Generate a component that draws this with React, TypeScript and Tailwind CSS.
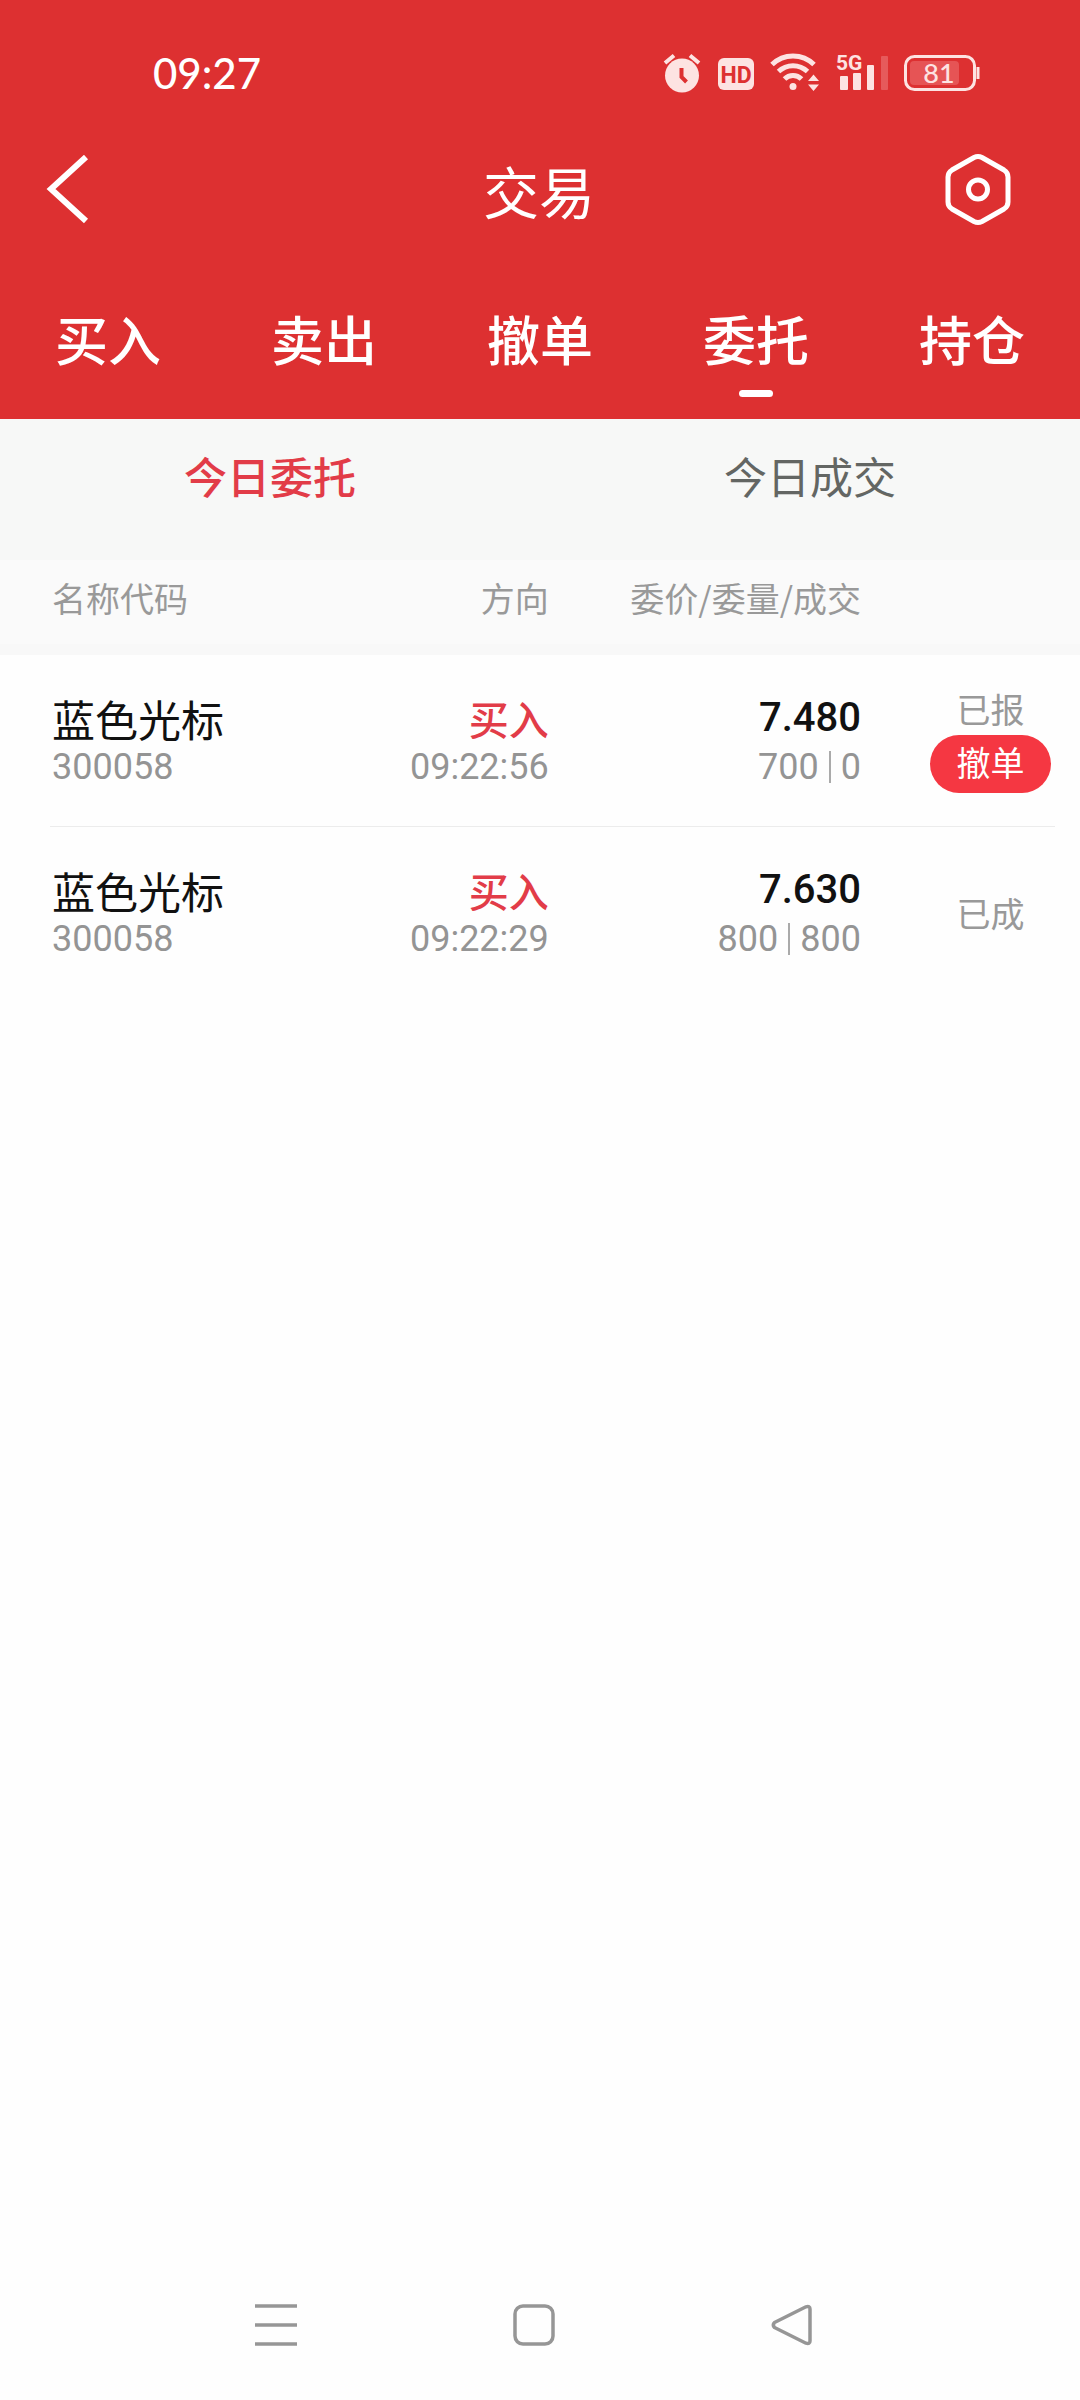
import type { ReactNode } from "react";

const tabs = ["买入", "卖出", "撤单", "委托", "持仓"];
const activeTab = "委托";

type Order = {
  name: string;
  code: string;
  side: string;
  time: string;
  price: string;
  amount: string;
  filled: string;
  status: string;
  cancellable: boolean;
};

const orders: Order[] = [
  {
    name: "蓝色光标",
    code: "300058",
    side: "买入",
    time: "09:22:56",
    price: "7.480",
    amount: "700",
    filled: "0",
    status: "已报",
    cancellable: true,
  },
  {
    name: "蓝色光标",
    code: "300058",
    side: "买入",
    time: "09:22:29",
    price: "7.630",
    amount: "800",
    filled: "800",
    status: "已成",
    cancellable: false,
  },
];

function AlarmIcon() {
  return (
    <svg width="38" height="40" viewBox="0 0 38 40" aria-hidden="true">
      <circle cx="19" cy="22.500" r="17" fill="#fde3e2" />
      <path d="M2 10 11 2.500M36 10 27 2.500" stroke="#fde3e2" strokeWidth="4" fill="none" />
      <path d="M18.500 15v9l5 5" stroke="#dd3031" strokeWidth="4" fill="none" />
    </svg>
  );
}

function HdIcon() {
  return (
    <svg width="37" height="40" viewBox="0 0 37 40" aria-hidden="true">
      <rect x="1" y="5" width="36" height="32" rx="6" fill="#fde3e2" />
      <text
        x="19"
        y="30"
        textAnchor="middle"
        fontFamily="Roboto, sans-serif"
        fontWeight="700"
        fontSize="23"
        fill="#dd3031"
      >
        HD
      </text>
    </svg>
  );
}

function WifiIcon() {
  return (
    <svg width="50" height="40" viewBox="0 0 50 40" aria-hidden="true">
      <g fill="none" stroke="#fde3e2" strokeWidth="5">
        <path d="M2 11.500a30 30 0 0 1 42 0" />
        <path d="M8.500 18.500a21 21 0 0 1 29 0" />
        <path d="M14.500 26a12 12 0 0 1 17 0" />
      </g>
      <circle cx="23" cy="33.500" r="3.500" fill="#fde3e2" />
      <path d="M38 28 43.500 21.500 49 28zM38 31.500 43.500 38 49 31.500z" fill="#fde3e2" />
    </svg>
  );
}

function SignalIcon() {
  return (
    <svg width="52" height="50" viewBox="0 -5 52 50" aria-hidden="true">
      <text
        x="0"
        y="17"
        fontFamily="Roboto, sans-serif"
        fontWeight="700"
        fontSize="21"
        fill="#fde3e2"
      >
        5G
      </text>
      <rect x="4" y="23" width="8" height="14" rx="1" fill="#fde3e2" />
      <rect x="17" y="20" width="8" height="17" rx="1" fill="#fde3e2" />
      <rect x="31" y="12" width="7" height="25" rx="1" fill="#fde3e2" />
      <rect x="45" y="3" width="7" height="34" rx="1" fill="#e65a5b" />
    </svg>
  );
}

function BatteryIcon() {
  return (
    <svg width="76" height="40" viewBox="0 0 76 40" aria-hidden="true">
      <rect x="1.500" y="3.500" width="69" height="33" rx="9" fill="none" stroke="#fde3e2" strokeWidth="3" />
      <rect x="6" y="8" width="49" height="24" rx="4" fill="#e65455" />
      <path d="M74 14v12" stroke="#fde3e2" strokeWidth="3" />
      <text
        x="35"
        y="30"
        textAnchor="middle"
        fontFamily="Lato, sans-serif"
        fontWeight="500"
        fontSize="27"
        fill="#fde3e2"
      >
        81
      </text>
    </svg>
  );
}

function StatusBar() {
  return (
    <div className="flex h-[146px] items-center justify-between pr-[100px] pl-[153px]">
      <span className="font-[Lato,sans-serif] text-[42px] font-medium">09:27</span>
      <div className="flex items-center gap-4">
        <AlarmIcon />
        <HdIcon />
        <WifiIcon />
        <SignalIcon />
        <BatteryIcon />
      </div>
    </div>
  );
}

function Cell({ className, children }: { className: string; children: ReactNode }) {
  return (
    <div
      className={`flex h-[172px] flex-col border-b border-[#ececec] group-last:border-transparent ${className}`}
    >
      {children}
    </div>
  );
}

function OrderRow({ order }: { order: Order }) {
  return (
    <tr className="group">
      <td className="pl-[50px]">
        <Cell className="items-start justify-center pt-1 pl-0.5">
          <span className="text-[43px] leading-[48px] text-[#111111]">{order.name}</span>
          <span className="font-[Roboto,sans-serif] text-[36px] leading-[50px] text-[#949494]">
            {order.code}
          </span>
        </Cell>
      </td>
      <td>
        <Cell className="items-end justify-center pt-1 pr-0.5">
          <span className="text-[40px] leading-[48px] font-medium text-[#e23c48]">{order.side}</span>
          <span className="font-[Roboto,sans-serif] text-[36px] leading-[50px] text-[#949494]">
            {order.time}
          </span>
        </Cell>
      </td>
      <td>
        <Cell className="items-end justify-center pt-1 pr-[3px] font-[Roboto,sans-serif]">
          <span className="text-[40px] leading-[48px] font-medium text-[#111111]">{order.price}</span>
          <span className="flex items-center text-[36px] leading-[50px] text-[#949494]">
            {order.amount}
            <span className="mx-2.5 h-8 w-0.5 bg-[#aaaaaa]" />
            {order.filled}
          </span>
        </Cell>
      </td>
      <td className="pr-[25px]">
        <Cell className="items-end justify-center pr-1">
          <div className="flex w-[121px] flex-col items-center gap-1.5">
            <span className="text-[34px] leading-[40px] text-[#999999]">{order.status}</span>
            {order.cancellable && (
              <button
                type="button"
                className="h-[58px] w-full rounded-full bg-[#f53742] pb-1 text-[34px] leading-[40px] text-white"
              >
                撤单
              </button>
            )}
          </div>
        </Cell>
      </td>
    </tr>
  );
}

export default function App() {
  return (
    <div className="flex min-h-screen flex-col bg-[#fefefe] font-['Noto_Sans_CJK_SC',sans-serif]">
      <header className="bg-[#dd3031] text-white">
        <StatusBar />
        <div className="grid h-[88px] grid-cols-[1fr_auto_1fr] items-center pr-[68px] pl-[46px]">
          <button type="button" aria-label="返回" className="justify-self-start">
            <svg width="44" height="70" viewBox="0 0 44 70" fill="none" aria-hidden="true">
              <path d="M40 2 5 34l35 32" stroke="white" strokeWidth="6" />
            </svg>
          </button>
          <h1 className="pl-5 text-[56px] leading-[64px]">交易</h1>
          <button type="button" aria-label="设置" className="justify-self-end">
            <svg width="68" height="74" viewBox="0 0 68 74" fill="none" stroke="white" aria-hidden="true">
              <path
                d="M30 4.500Q34 2.500 38 4.500L60 17Q64 19.500 64 24V49Q64 53.500 60 56L38 68.500Q34 70.500 30 68.500L8 56Q4 53.500 4 49V24Q4 19.500 8 17Z"
                strokeWidth="5"
              />
              <circle cx="34" cy="36.500" r="9.500" strokeWidth="5" />
            </svg>
          </button>
        </div>
        <nav className="grid grid-cols-5 pt-[72px] pb-[22px]">
          {tabs.map((tab) => (
            <button
              key={tab}
              type="button"
              className="flex flex-col items-center text-[53px] leading-[64px] font-medium"
            >
              {tab}
              <span
                className={
                  tab === activeTab
                    ? "mt-5 h-[7px] w-[34px] rounded-sm bg-white"
                    : "mt-5 h-[7px] w-[34px] bg-transparent"
                }
              />
            </button>
          ))}
        </nav>
      </header>

      <div className="grid h-[141px] grid-cols-2 items-start bg-[#f7f8f7] pt-[31px] text-[43px] leading-[50px]">
        <button type="button" className="font-medium text-[#e23c48]">
          今日委托
        </button>
        <button type="button" className="text-[#636663]">
          今日成交
        </button>
      </div>

      <table className="w-full table-fixed border-separate border-spacing-0">
        <thead>
          <tr className="h-[95px] bg-[#fafafa] text-[34px] leading-[40px] text-[#999999]">
            <th className="w-[25%] border-b-[11px] border-[#f8f8f8] pb-2 pl-[52px] text-left font-normal">
              名称代码
            </th>
            <th className="w-[26%] border-b-[11px] border-[#f8f8f8] pr-0.5 pb-2 text-right font-normal">
              方向
            </th>
            <th className="w-[29%] border-b-[11px] border-[#f8f8f8] pr-[3px] pb-2 text-right font-normal whitespace-nowrap">
              委价/委量/成交
            </th>
            <th className="border-b-[11px] border-[#f8f8f8]" aria-label="状态" />
          </tr>
        </thead>
        <tbody>
          {orders.map((order) => (
            <OrderRow key={order.time} order={order} />
          ))}
        </tbody>
      </table>

      <footer className="mt-auto grid h-[150px] grid-cols-3 place-items-center pr-[159px] pl-[147px]">
        <button type="button" aria-label="最近任务">
          <svg width="42" height="42" viewBox="0 0 42 42" stroke="#969696" strokeWidth="3.500" aria-hidden="true">
            <path d="M0 2H42M0 21H42M0 40H42" />
          </svg>
        </button>
        <button type="button" aria-label="主屏幕">
          <svg width="42" height="42" viewBox="0 0 42 42" fill="none" stroke="#969696" strokeWidth="3.500" aria-hidden="true">
            <rect x="2" y="2" width="38" height="38" rx="8" />
          </svg>
        </button>
        <button type="button" aria-label="返回上一页">
          <svg width="42" height="42" viewBox="0 0 42 42" fill="none" stroke="#969696" strokeWidth="3.500" aria-hidden="true">
            <path
              d="M3.500 18.500 35 2.800Q39 1.500 39 5V37Q39 40.500 35 39.200L3.500 23.500Q1 21 3.500 18.500Z"
              strokeLinejoin="round"
            />
          </svg>
        </button>
      </footer>
    </div>
  );
}
